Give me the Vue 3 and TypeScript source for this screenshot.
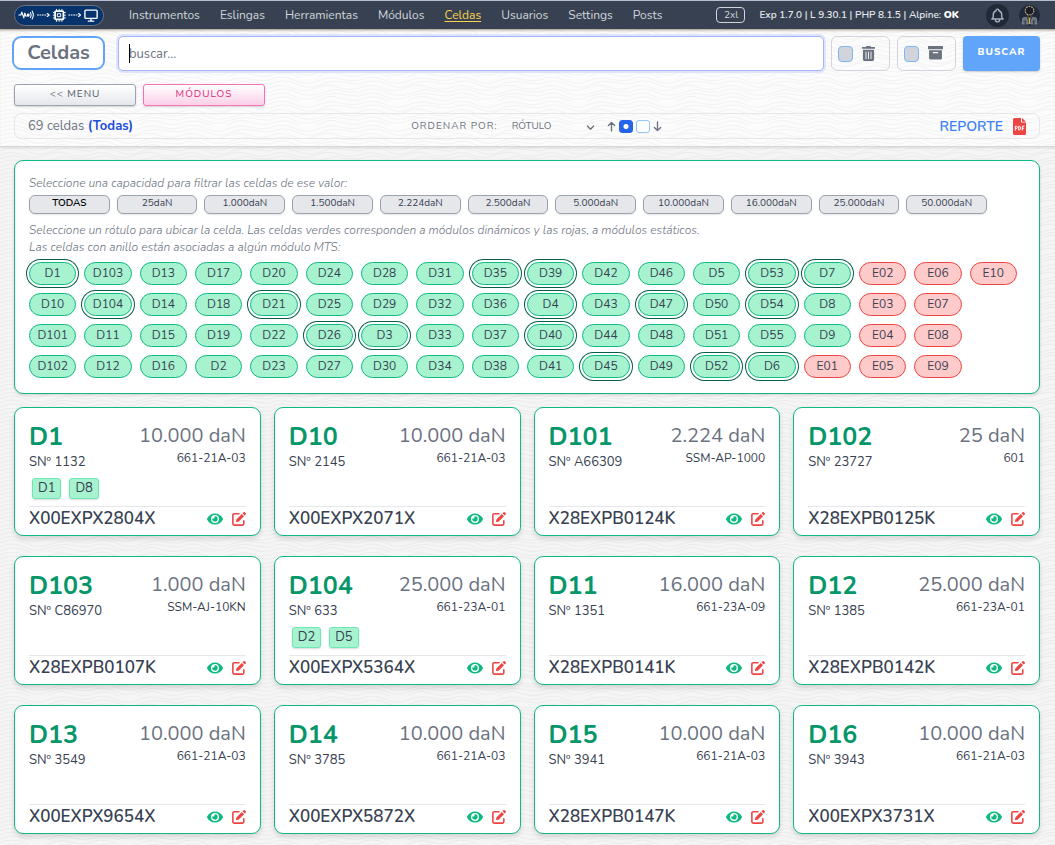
<script setup lang="ts">
import { onMounted, ref } from 'vue'

interface Cell {
  name: string
  capacity: string
  serial: string
  model: string
  code: string
  modules: string[]
}

const links = ['Instrumentos', 'Eslingas', 'Herramientas', 'Módulos', 'Celdas', 'Usuarios', 'Settings', 'Posts']

const capacities = ['TODAS', '25daN', '1.000daN', '1.500daN', '2.224daN', '2.500daN', '5.000daN', '10.000daN', '16.000daN', '25.000daN', '50.000daN']

const labels = [
  'D1', 'D10', 'D101', 'D102', 'D103', 'D104', 'D11', 'D12', 'D13', 'D14', 'D15', 'D16', 'D17', 'D18', 'D19', 'D2',
  'D20', 'D21', 'D22', 'D23', 'D24', 'D25', 'D26', 'D27', 'D28', 'D29', 'D3', 'D30', 'D31', 'D32', 'D33', 'D34',
  'D35', 'D36', 'D37', 'D38', 'D39', 'D4', 'D40', 'D41', 'D42', 'D43', 'D44', 'D45', 'D46', 'D47', 'D48', 'D49',
  'D5', 'D50', 'D51', 'D52', 'D53', 'D54', 'D55', 'D6', 'D7', 'D8', 'D9', 'E01', 'E02', 'E03', 'E04', 'E05',
  'E06', 'E07', 'E08', 'E09', 'E10',
]
const ringed = new Set(['D1', 'D104', 'D21', 'D26', 'D3', 'D35', 'D39', 'D4', 'D40', 'D45', 'D47', 'D52', 'D53', 'D54', 'D6', 'D7'])

const cells: Cell[] = [
  { name: 'D1', capacity: '10.000 daN', serial: '1132', model: '661-21A-03', code: 'X00EXPX2804X', modules: ['D1', 'D8'] },
  { name: 'D10', capacity: '10.000 daN', serial: '2145', model: '661-21A-03', code: 'X00EXPX2071X', modules: [] },
  { name: 'D101', capacity: '2.224 daN', serial: 'A66309', model: 'SSM-AP-1000', code: 'X28EXPB0124K', modules: [] },
  { name: 'D102', capacity: '25 daN', serial: '23727', model: '601', code: 'X28EXPB0125K', modules: [] },
  { name: 'D103', capacity: '1.000 daN', serial: 'C86970', model: 'SSM-AJ-10KN', code: 'X28EXPB0107K', modules: [] },
  { name: 'D104', capacity: '25.000 daN', serial: '633', model: '661-23A-01', code: 'X00EXPX5364X', modules: ['D2', 'D5'] },
  { name: 'D11', capacity: '16.000 daN', serial: '1351', model: '661-23A-09', code: 'X28EXPB0141K', modules: [] },
  { name: 'D12', capacity: '25.000 daN', serial: '1385', model: '661-23A-01', code: 'X28EXPB0142K', modules: [] },
  { name: 'D13', capacity: '10.000 daN', serial: '3549', model: '661-21A-03', code: 'X00EXPX9654X', modules: [] },
  { name: 'D14', capacity: '10.000 daN', serial: '3785', model: '661-21A-03', code: 'X00EXPX5872X', modules: [] },
  { name: 'D15', capacity: '10.000 daN', serial: '3941', model: '661-21A-03', code: 'X28EXPB0147K', modules: [] },
  { name: 'D16', capacity: '10.000 daN', serial: '3943', model: '661-21A-03', code: 'X00EXPX3731X', modules: [] },
]

const query = ref('')
const capacity = ref('TODAS')
const direction = ref('asc')
const trashed = ref(false)
const archived = ref(false)
const searchBox = ref<HTMLInputElement | null>(null)

onMounted(() => searchBox.value?.focus())
</script>

<template>
  <div class="page">
    <nav class="nav">
      <a href="#" class="logo" aria-label="Inicio">
        <svg viewBox="0 0 90 20" width="90" height="20" fill="none" stroke="#fff" stroke-linecap="round" stroke-linejoin="round">
          <path d="M4 10h2l1-3 2 6 1-5 1 3h3" stroke-width="1.2" />
          <circle cx="13.500" cy="10" r="1.500" fill="#fff" stroke="none" />
          <path d="M15.800 7.500q1.500 2.500 0 5M17.500 6q2.500 4 0 8" stroke-width="1.100" />
          <path d="M23 10h9M55 10h9" stroke-width="1" stroke-dasharray="1 1.500" />
          <path d="M33 8.500l2 1.500-2 1.500M65 8.500l2 1.500-2 1.500" stroke-width="1.200" />
          <rect x="41" y="6" width="8.500" height="8.500" rx="1" stroke-width="1.800" />
          <rect x="43.700" y="8.700" width="3" height="3" stroke-width="1" />
          <path d="M42.500 4.200v1M45.200 4.200v1M48 4.200v1M42.500 15.500v1M45.200 15.500v1M48 15.500v1M39.200 7.500h1M39.200 10.200h1M39.200 13h1M50.500 7.500h1M50.500 10.200h1M50.500 13h1" stroke-width="1" />
          <rect x="71.500" y="5" width="12.500" height="8.500" rx="1" stroke-width="1.400" />
          <path d="M77.700 14v2M75 16.300h5.500" stroke-width="1.400" />
        </svg>
      </a>
      <div class="links">
        <a v-for="link in links" :key="link" href="#" :class="{ current: link === 'Celdas' }">{{ link }}</a>
      </div>
      <span class="size">2xl</span>
      <span class="versions">Exp 1.7.0 | L 9.30.1 | PHP 8.1.5 | Alpine: <b>OK</b></span>
      <button type="button" class="round" aria-label="Notificaciones">
        <svg viewBox="0 0 24 24" width="17" height="17" fill="none" stroke="#a7b0be" stroke-width="2" stroke-linecap="round" stroke-linejoin="round">
          <path d="M15 17h5l-1.400-1.400A2 2 0 0 1 18 14.200V11a6 6 0 0 0-4-5.700V5a2 2 0 1 0-4 0v.3A6 6 0 0 0 6 11v3.200c0 .5-.2 1-.6 1.400L4 17h5m6 0v1a3 3 0 1 1-6 0v-1m6 0H9" />
        </svg>
      </button>
      <button type="button" class="round avatar" aria-label="Usuario">
        <svg viewBox="0 0 22 22" width="21" height="21">
          <circle cx="11" cy="6" r="4.500" fill="#1a1d22" stroke="#b9a58a" stroke-width="1.200" stroke-dasharray="2 .8" />
          <path d="M9.500 10.500h3v3h-3z" fill="#111" stroke="#9a8668" stroke-width=".7" />
          <path d="M3.500 20v-4.500q0-2.500 2.500-2.500h1.800L10 20zM18.500 20v-4.500q0-2.500-2.500-2.500h-1.800L12 20z" fill="#66717f" stroke="#8a949f" stroke-width=".8" />
          <path d="M6.500 16v4.500M15.500 16v4.500" stroke="#1f2937" />
          <path d="M11 13l1 1.500-.5 5.500h-1L10 14.500z" fill="#d6aa4b" />
        </svg>
      </button>
    </nav>

    <header class="header">
      <form class="search" @submit.prevent>
        <h1>Celdas</h1>
        <div class="field" :class="{ empty: !query }">
          <input ref="searchBox" v-model="query" class="query" type="text" placeholder="buscar..." aria-label="Buscar" />
        </div>
        <label class="toggle">
          <input v-model="trashed" type="checkbox" aria-label="Eliminadas" />
          <svg viewBox="0 0 14 16" width="13" height="15" fill="#6b7280">
            <path d="M5 0h4l.7 1H14v2H0V1h4.300zM1 4h12v10.500A1.500 1.500 0 0 1 11.500 16h-9A1.500 1.500 0 0 1 1 14.500z" />
            <path d="M4.300 6v8M7 6v8M9.700 6v8" stroke="#f8f8f8" />
          </svg>
        </label>
        <label class="toggle">
          <input v-model="archived" type="checkbox" aria-label="Archivadas" />
          <svg viewBox="0 0 14 14" width="15" height="15" fill="#6b7280">
            <path d="M.5 0h13a.5.5 0 0 1 .5.500V3H0V.5A.5.500 0 0 1 .5 0zM1 4h12v7.500a1 1 0 0 1-1 1H2a1 1 0 0 1-1-1z" />
            <path d="M5 6.200h4" stroke="#f8f8f8" stroke-width="1.200" stroke-linecap="round" />
          </svg>
        </label>
        <button type="submit" class="submit">BUSCAR</button>
      </form>

      <div class="actions">
        <button type="button">&lt;&lt; MENU</button>
        <button type="button" class="pink">MÓDULOS</button>
      </div>

      <div class="summary">
        <p class="count">69 celdas <b>(Todas)</b></p>
        <div class="order">
          <label for="order-by">ORDENAR POR:</label>
          <div class="select">
            <select id="order-by">
              <option>RÓTULO</option>
            </select>
            <svg viewBox="0 0 10 10" width="9" height="9" fill="none" stroke="#6b7280" stroke-width="1.500" stroke-linecap="round" stroke-linejoin="round"><path d="M1.500 4.500L5 8l3.500-3.500" /></svg>
          </div>
          <svg viewBox="0 0 10 12" width="9" height="11" fill="none" stroke="#6b7280" stroke-width="1.500" stroke-linecap="round" stroke-linejoin="round"><path d="M5 11V1.500M1.500 5L5 1.500 8.500 5" /></svg>
          <input v-model="direction" type="radio" name="direction" value="asc" aria-label="Ascendente" />
          <input v-model="direction" type="radio" name="direction" value="desc" aria-label="Descendente" />
          <svg viewBox="0 0 10 12" width="9" height="11" fill="none" stroke="#6b7280" stroke-width="1.500" stroke-linecap="round" stroke-linejoin="round"><path d="M5 1v9.500M1.500 7L5 10.500 8.500 7" /></svg>
        </div>
        <a href="#" class="report">
          REPORTE
          <svg viewBox="0 0 13 17" width="13" height="17">
            <path d="M1.500 0H8v4.500h5V15.500A1.500 1.500 0 0 1 11.500 17h-10A1.500 1.500 0 0 1 0 15.500v-14A1.500 1.500 0 0 1 1.500 0zM9 0l4 3.700H9z" fill="#ef4444" />
            <path d="M2.300 12.500V8.200h.9a1.100 1.200 0 0 1 0 2.400h-.9M5.700 8.200v3.800h.6q1.200 0 1.200-1.900T6.300 8.200zM9.300 12.500V8.200h2M9.300 10.300h1.600" fill="none" stroke="#fff" stroke-width="1" />
          </svg>
        </a>
      </div>
    </header>

    <main class="main">
      <section class="filters">
        <p>Seleccione una capacidad para filtrar las celdas de ese valor:</p>
        <div class="capacities">
          <button v-for="item in capacities" :key="item" type="button" :class="{ active: item === capacity }" @click="capacity = item">{{ item }}</button>
        </div>
        <p>
          Seleccione un rótulo para ubicar la celda. Las celdas verdes corresponden a módulos dinámicos y las rojas, a módulos estáticos.<br />
          Las celdas con anillo están asociadas a algún módulo MTS:
        </p>
        <div class="labels">
          <button v-for="label in labels" :key="label" type="button" :class="{ static: label.startsWith('E'), ring: ringed.has(label) }">{{ label }}</button>
        </div>
      </section>

      <section class="cards">
        <article v-for="cell in cells" :key="cell.name" class="card">
          <div class="top">
            <div>
              <h2>{{ cell.name }}</h2>
              <p class="serial">SNº {{ cell.serial }}</p>
            </div>
            <div class="right">
              <p class="capacity">{{ cell.capacity }}</p>
              <p class="model">{{ cell.model }}</p>
            </div>
          </div>
          <div class="modules">
            <a v-for="item in cell.modules" :key="item" href="#">{{ item }}</a>
          </div>
          <footer>
            <strong>{{ cell.code }}</strong>
            <button type="button" :aria-label="`Ver ${cell.name}`">
              <svg viewBox="0 0 576 512" width="16" height="16" fill="#10b981">
                <path d="M572.500 241.400C518.300 125.600 410.900 54 288 54S57.700 125.600 3.500 241.400a32.400 32.400 0 0 0 0 29.200C57.700 386.400 165.100 458 288 458s230.300-71.600 284.500-187.400a32.400 32.400 0 0 0 0-29.200zM288 400a144 144 0 1 1 144-144 143.900 143.900 0 0 1-144 144zm0-240a95.300 95.300 0 0 0-25.300 3.800 47.900 47.900 0 0 1-66.900 66.900A95.800 95.800 0 1 0 288 160z" />
              </svg>
            </button>
            <button type="button" :aria-label="`Editar ${cell.name}`">
              <svg viewBox="0 0 16 16" width="14" height="14">
                <path d="M8 2H2.500A1.500 1.500 0 0 0 1 3.500v10A1.500 1.500 0 0 0 2.500 15h9.500a1.500 1.500 0 0 0 1.500-1.500V10" fill="none" stroke="#ef4444" stroke-width="1.800" stroke-linecap="round" />
                <path d="M11.200 2.300l2.500 2.500-6.200 6.200-3 .5.500-3zM12 1.500l1.200-1.200a1 1 0 0 1 1.400 0l1.100 1.100a1 1 0 0 1 0 1.400L14.500 4z" fill="#ef4444" />
              </svg>
            </button>
          </footer>
        </article>
      </section>
    </main>
  </div>
</template>

<style>
body {
  margin: 0;
  background: #f5f5f5;
}
</style>

<style scoped>
* {
  box-sizing: border-box;
  margin: 0;
}

.page {
  --waves: url("data:image/svg+xml,%3Csvg xmlns='http://www.w3.org/2000/svg' width='90' height='24' fill='none' stroke='%23000' stroke-opacity='.035'%3E%3Cpath d='M0 3Q12-3 24 3T48 4 70 2 90 3M0 7Q14 1 27 7T50 8 72 5 90 7M0 11Q10 6 22 11T46 11 68 10 90 11M0 15Q15 9 26 15T52 16 70 13 90 15M0 19Q12 13 24 19T48 20 71 17 90 19M0 23Q13 17 27 23T50 23 70 21 90 23'/%3E%3C/svg%3E");
  min-height: 100vh;
  background: #f5f5f5 var(--waves);
  color: #374151;
  font-family: Nunito, "Open Sans", "Noto Sans", sans-serif;
  font-size: 12px;
}

button,
input,
select {
  font-family: inherit;
  color: inherit;
}

button {
  cursor: pointer;
}

a {
  color: inherit;
  text-decoration: none;
}

.nav {
  display: flex;
  align-items: center;
  height: 29px;
  padding: 0 15px 0 14px;
  border-top: 1px solid #b8bdd3;
  background: #374151;
  color: #d1d5db;
}

.logo {
  display: flex;
  width: 90px;
  height: 21px;
  align-items: center;
  justify-content: center;
  border: 1px solid #6b7280;
  border-radius: 11px;
  background: #06336b;
}

.links {
  display: flex;
  flex: 1;
  gap: 20px;
  padding-left: 25px;
}

.links .current {
  color: #fcd34d;
  text-decoration: underline;
  text-underline-offset: 2px;
}

.size {
  width: 29px;
  margin-right: 14px;
  border: 1px solid #d1d5db;
  border-radius: 4px;
  font-size: 10px;
  line-height: 14px;
  text-align: center;
}

.versions {
  margin-right: 27px;
  color: #e5e7eb;
  font-size: 10px;
  font-weight: 600;
}

.versions b {
  color: #fff;
}

.round {
  display: flex;
  width: 23px;
  height: 23px;
  align-items: center;
  justify-content: center;
  padding: 0;
  border: 0;
  border-radius: 50%;
  background: #1f2937;
}

.avatar {
  width: 21px;
  height: 21px;
  margin: 0 0 0 10px;
}

.header {
  padding: 7px 15px 7px 14px;
  border-bottom: 1px solid #d6d8d8;
  background: #fcfcfc var(--waves);
  box-shadow: 0 1px 2px rgb(0 0 0 / 10%), inset 0 3px 3px -2px rgb(70 50 30 / 55%);
}

.search {
  display: flex;
  gap: 7px;
}

h1 {
  width: 93px;
  height: 34px;
  margin: 0 6px 0 -2px;
  border: 2px solid #60a5fa;
  border-radius: 9px;
  background: #fff;
  color: #6b7280;
  font-size: 20px;
  font-weight: 700;
  line-height: 30px;
  text-align: center;
}

.field {
  position: relative;
  flex: 1;
  min-width: 0;
}

.query {
  display: block;
  width: 100%;
  height: 35px;
  padding: 0 10px;
  border: 1px solid #a5b4fc;
  border-radius: 5px;
  outline: 0;
  background: #fff;
  box-shadow: 0 0 0 2px #e0e4fb;
  font-size: 13px;
}

.query::placeholder {
  color: #6b7280;
}

/* Tall caret, shown while the focused box is still empty */
.field.empty .query {
  caret-color: transparent;
}

.field.empty:focus-within::after {
  position: absolute;
  top: 8px;
  left: 11px;
  width: 1px;
  height: 19px;
  background: #000;
  content: "";
}

.toggle {
  display: flex;
  width: 59px;
  align-items: center;
  gap: 9px;
  padding-left: 6px;
  border: 1px solid #d1d5db;
  border-radius: 6px;
}

.toggle input {
  width: 15px;
  height: 16px;
  border: 1px solid #7db5f5;
  border-radius: 4px;
  appearance: none;
  background: #d1d5db;
}

.submit {
  width: 77px;
  padding: 0 0 3px;
  border: 0;
  border-radius: 4px;
  background: #60a5fa;
  box-shadow: 0 1px 2px rgb(0 0 0 / 20%);
  color: #fff;
  font-size: 10px;
  font-weight: 800;
  letter-spacing: 1px;
}

.actions {
  display: flex;
  gap: 7px;
  margin: 13px 0 7px;
}

.actions button {
  width: 122px;
  height: 22px;
  padding: 0 0 3px;
  border: 1px solid #9ca3af;
  border-radius: 3px;
  background: linear-gradient(#fff, #e5e7eb);
  box-shadow: 0 1px 2px rgb(0 0 0 / 15%);
  color: #4b5563;
  font-size: 10px;
  letter-spacing: 1px;
  line-height: 14px;
}

.actions .pink {
  border-color: #f472b6;
  background: linear-gradient(#fff, #fbcfe8);
  color: #db2777;
}

.summary {
  display: flex;
  justify-content: space-between;
  align-items: center;
  height: 26px;
  padding: 0 13px;
  border: 1px solid #e5e7eb;
  border-radius: 7px;
  color: #6b7280;
}

.count {
  font-size: 13px;
}

.count b {
  color: #1d4ed8;
  font-weight: 700;
}

.order {
  display: flex;
  align-items: center;
  gap: 3px;
  font-size: 10px;
}

.order label {
  margin-right: 11px;
  letter-spacing: 1px;
}

.select {
  display: flex;
  width: 83px;
  align-items: center;
  margin-right: 9px;
}

.select select {
  flex: 1;
  min-width: 0;
  padding: 0;
  border: 0;
  appearance: none;
  background: transparent;
  font-size: 10px;
}

.order input {
  width: 14px;
  height: 13px;
  margin: 0;
  border: 1px solid #93c5fd;
  border-radius: 3px;
  appearance: none;
  background: #fff;
}

.order input:checked {
  border-color: #2563eb;
  background: radial-gradient(circle, #fff 2px, #2563eb 3px);
}

.report {
  display: flex;
  align-items: center;
  gap: 10px;
  color: #3b82f6;
  font-size: 14px;
  font-weight: 600;
}

.main {
  padding: 13px 15px 11px 14px;
}

.filters {
  padding: 14px 14px 15px;
  border: 1px solid #10b981;
  border-radius: 9px;
  background: #fff;
  box-shadow: 0 1px 3px rgb(0 0 0 / 15%);
}

.filters p {
  color: #6b7280;
  font-size: 12px;
  font-style: italic;
  font-weight: 300;
  line-height: 17px;
}

.capacities {
  display: grid;
  grid-template-columns: repeat(11, minmax(0, 1fr));
  gap: 7px;
  margin: 3px 0 8px;
  padding-right: 38px;
}

.capacities button {
  height: 19px;
  padding: 0 0 3px;
  border: 1px solid #9ca3af;
  border-radius: 6px;
  background: #e5e7eb;
  box-shadow: 0 1px 2px rgb(0 0 0 / 10%);
  font-size: 10px;
  line-height: 14px;
}

.capacities .active {
  color: #000;
  font-weight: 600;
}

.labels {
  display: grid;
  grid-template-columns: repeat(18, minmax(0, 1fr));
  grid-template-rows: repeat(4, 23px);
  grid-auto-flow: column;
  gap: 8px;
  margin-top: 6px;
  padding-right: 8px;
}

.labels button {
  padding: 0 0 2px;
  border: 1px solid #10b981;
  border-radius: 12px;
  background: #a7f3d0;
  font-size: 12px;
  line-height: 16px;
}

.labels .static {
  border-color: #ef4444;
  background: #fecaca;
}

.labels .ring {
  box-shadow: 0 0 0 2px #fff, 0 0 0 3px #065f46;
}

.cards {
  display: grid;
  grid-template-columns: repeat(4, minmax(0, 1fr));
  gap: 20px 13px;
  margin-top: 13px;
}

.card {
  display: flex;
  flex-direction: column;
  min-height: 129px;
  padding: 13px 14px 4px;
  border: 1px solid #10b981;
  border-radius: 9px;
  background: #fff;
  box-shadow: 0 3px 5px rgb(0 0 0 / 12%);
}

.top {
  display: flex;
  justify-content: space-between;
}

h2 {
  color: #059669;
  font-size: 25px;
  font-weight: 700;
  line-height: 32px;
}

.serial {
  font-size: 13px;
  line-height: 18px;
}

.right {
  text-align: right;
}

.capacity {
  color: #6b7280;
  font-size: 20px;
  font-weight: 400;
  line-height: 30px;
}

.model {
  font-size: 12px;
  line-height: 14px;
}

.modules {
  display: flex;
  flex: 1;
  gap: 8px;
  align-items: flex-start;
  padding: 7px 3px 0;
}

.modules a {
  padding: 0 5px;
  border: 1px solid #6ee7b7;
  border-radius: 3px;
  background: #a7f3d0;
  box-shadow: 0 1px 2px rgb(0 0 0 / 15%);
  font-size: 13px;
  line-height: 19px;
}

footer {
  display: flex;
  align-items: center;
  gap: 9px;
  border-top: 1px solid #e5e7eb;
}

footer strong {
  flex: 1;
  font-size: 17px;
  font-weight: 600;
  line-height: 24px;
}

footer button {
  display: flex;
  padding: 0;
  border: 0;
  background: none;
}
</style>
